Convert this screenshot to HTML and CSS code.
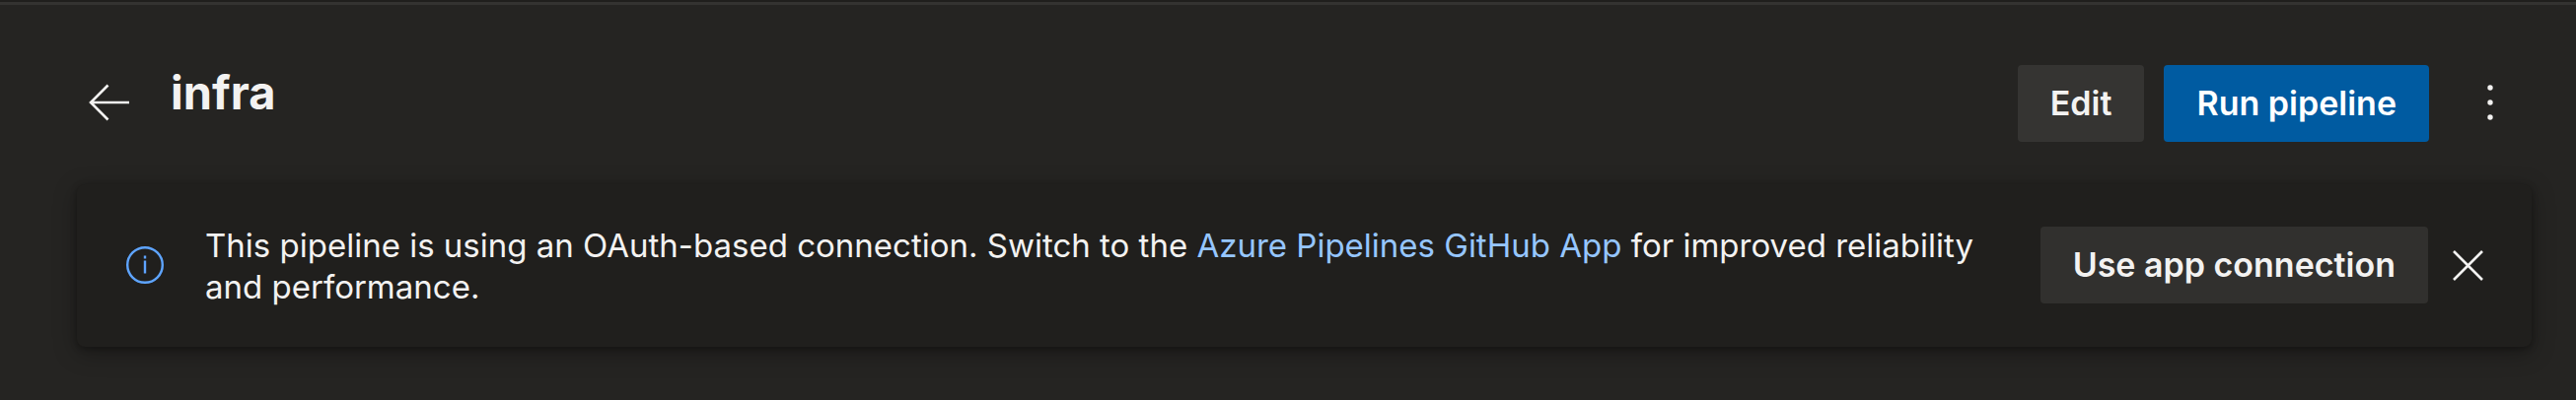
FILE: index.html
```html
<!DOCTYPE html>
<html lang="en">
<head>
<meta charset="utf-8">
<title>infra</title>
<link rel="stylesheet" href="styles.css">
</head>
<body>
<main class="page">
  <header class="header">
    <button class="icon-button" type="button" aria-label="Back">
      <svg class="icon" width="44" height="44" viewBox="0 0 44 44" aria-hidden="true"><path d="M42 21H3M20.500 3.500L3 21l17.500 17.500"/></svg>
    </button>
    <h1 class="title">infra</h1>
    <div class="actions">
      <button class="button" type="button">Edit</button>
      <button class="button button-primary" type="button">Run pipeline</button>
      <button class="icon-button more" type="button" aria-label="More actions">
        <svg width="44" height="44" viewBox="0 0 44 44" fill="currentColor" aria-hidden="true"><circle cx="22" cy="6" r="2.700"/><circle cx="22" cy="21" r="2.700"/><circle cx="22" cy="36" r="2.700"/></svg>
      </button>
    </div>
  </header>
  <section class="banner">
    <svg class="info" width="40" height="40" viewBox="0 0 40 40" aria-hidden="true"><circle cx="20" cy="20" r="17.800"/><path d="M20 15.500v13M20 10.500v3"/></svg>
    <p class="message">This pipeline is using an OAuth-based connection. Switch to the <a class="link" href="#">Azure Pipelines GitHub App</a> for improved reliability and performance.</p>
    <button class="button button-banner" type="button">Use app connection</button>
    <button class="icon-button close" type="button" aria-label="Dismiss">
      <svg class="icon" width="44" height="44" viewBox="0 0 44 44" aria-hidden="true"><path d="M8 8l29 29M37 8L8 37"/></svg>
    </button>
  </section>
</main>
</body>
</html>
```
FILE: styles.css
```css
* { box-sizing: border-box; }
body {
  margin: 0;
  background: #252422;
  color: #f3f2f1;
  font-family: Inter, Roboto, sans-serif;
  font-size: 33px;
  line-height: 42px;
}
button { font: inherit; color: inherit; border: 0; }
.page {
  min-height: 100vh;
  border-top: 2px solid #201f1d;
  box-shadow: inset 0 3px #343331;
  padding: 64px 45px 53px 78px;
}
.header {
  display: flex;
  align-items: center;
  padding-left: 11px;
  padding-right: 20px;
}
.icon-button {
  display: flex;
  padding: 0;
  background: none;
}
.icon {
  fill: none;
  stroke: currentColor;
  stroke-width: 2.6;
}
.title {
  margin: 0 0 22px 40px;
  font-size: 47px;
  line-height: 56px;
  font-weight: 700;
}
.actions {
  display: flex;
  align-items: center;
  gap: 20px;
  margin-left: auto;
}
.button {
  height: 78px;
  padding: 0 33px;
  border-radius: 4px;
  background: #353432;
  font-size: 34px;
  font-weight: 600;
  white-space: nowrap;
}
.button-primary { background: #005ba1; color: #fff; }
.more { margin-left: 20px; }
.banner {
  display: flex;
  align-items: center;
  margin-top: 43px;
  padding: 39px 43px 40px 49px;
  border-radius: 8px;
  background: #201f1d;
  box-shadow: 0 6px 24px rgba(0, 0, 0, .3), 0 2px 6px rgba(0, 0, 0, .3);
}
.info {
  flex: none;
  fill: none;
  stroke: #5ea4ff;
  stroke-width: 2.4;
}
.message { flex: 1; margin: 0 36px 0 41px; padding-top: 2px; }
.link { color: #96c6ff; text-decoration: none; }
.button-banner { background: #31302e; }
.close { margin-left: 18px; }
```
